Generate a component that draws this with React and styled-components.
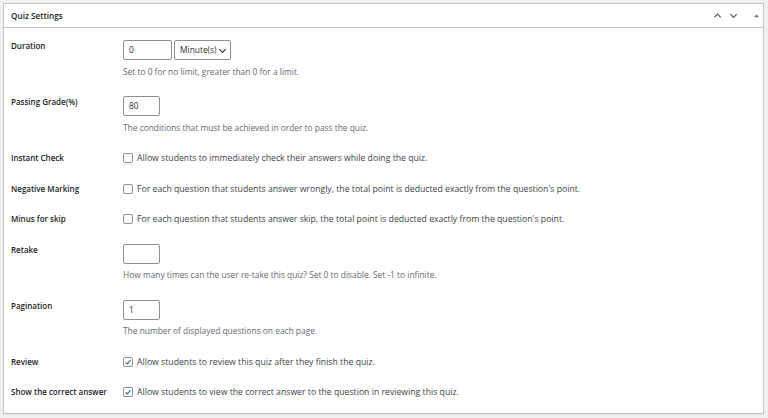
import React from "react";
import styled, { createGlobalStyle } from "styled-components";

const GlobalStyle = createGlobalStyle`
    html, body {
        margin: 0;
        padding: 0;
        background: #f0f0f1;
    }
    body {
        font-family: "Open Sans", "Noto Sans", sans-serif;
        font-size: 8.4px;
        color: #3c434a;
    }
`;

const settings = [
    {
        label: "Duration",
        type: "duration",
        value: "0",
        desc: "Set to 0 for no limit, greater than 0 for a limit.",
    },
    {
        label: "Passing Grade(%)",
        type: "number",
        value: "80",
        desc: "The conditions that must be achieved in order to pass the quiz.",
    },
    {
        label: "Instant Check",
        type: "check",
        checked: false,
        text: "Allow students to immediately check their answers while doing the quiz.",
    },
    {
        label: "Negative Marking",
        type: "check",
        checked: false,
        text: "For each question that students answer wrongly, the total point is deducted exactly from the question's point.",
    },
    {
        label: "Minus for skip",
        type: "check",
        checked: false,
        text: "For each question that students answer skip, the total point is deducted exactly from the question's point.",
    },
    {
        label: "Retake",
        type: "number",
        value: "",
        desc: "How many times can the user re-take this quiz? Set 0 to disable. Set -1 to infinite.",
    },
    {
        label: "Pagination",
        type: "number",
        value: "1",
        desc: "The number of displayed questions on each page.",
    },
    {
        label: "Review",
        type: "check",
        checked: true,
        text: "Allow students to review this quiz after they finish the quiz.",
    },
    {
        label: "Show the correct answer",
        type: "check",
        checked: true,
        text: "Allow students to view the correct answer to the question in reviewing this quiz.",
    },
];

const Chevron = ({ up, color = "#50575e" }) => (
    <svg width="9" height="9" viewBox="0 0 10 10">
        <path
            d={up ? "M1.5 7 L5 3.5 L8.5 7" : "M1.5 3.5 L5 7 L8.5 3.5"}
            fill="none"
            stroke={color}
            strokeWidth="1.3"
        />
    </svg>
);

const Caret = () => (
    <svg width="7" height="7" viewBox="0 0 8 8">
        <path d="M1 6 L4 2.5 L7 6 Z" fill="#787c82" />
    </svg>
);

const Tick = () => (
    <svg width="8" height="8" viewBox="0 0 10 10">
        <path
            d="M2 5.2 L4.2 7.3 L8.2 2.6"
            fill="none"
            stroke="#2271b1"
            strokeWidth="1.5"
        />
    </svg>
);

const Field = ({ item }) => {
    if (item.type === "check") {
        return (
            <CheckLine>
                <CheckBox>{item.checked && <Tick />}</CheckBox>
                <span>{item.text}</span>
            </CheckLine>
        );
    }
    return (
        <div>
            <Controls>
                <TextInput wide={item.type === "duration"}>{item.value}</TextInput>
                {item.type === "duration" && (
                    <Select>
                        Minute(s)
                        <Chevron color="#2c3338" />
                    </Select>
                )}
            </Controls>
            <Description>{item.desc}</Description>
        </div>
    );
};

const App = () => {
    return (
        <>
            <GlobalStyle />
            <Panel>
                <Header>
                    <Title>Quiz Settings</Title>
                    <Actions>
                        <Chevron up />
                        <Chevron />
                        <CaretWrap>
                            <Caret />
                        </CaretWrap>
                    </Actions>
                </Header>
                <Body>
                    {settings.map((item) => (
                        <Row key={item.label} compact={item.type === "check"}>
                            <Label>{item.label}</Label>
                            <Field item={item} />
                        </Row>
                    ))}
                </Body>
            </Panel>
        </>
    );
};

const Panel = styled.div`
    margin: 3px 4px 5px 3px;
    background: #fff;
    border: 1px solid #c3c4c7;
    box-shadow: 0 1px 1px rgba(0, 0, 0, 0.04);
`;

const Header = styled.div`
    height: 23px;
    display: flex;
    align-items: center;
    justify-content: space-between;
    padding: 0 3px 0 7px;
    border-bottom: 1px solid #c3c4c7;
`;

const Title = styled.div`
    font-weight: 600;
    color: #1d2327;
    font-size: 8.2px;
`;

const Actions = styled.div`
    display: flex;
    align-items: center;
    gap: 7px;
`;

const CaretWrap = styled.span`
    display: flex;
    margin-left: 8px;
`;

const Body = styled.div`
    padding: 3px 7px 5px 7px;
`;

const Row = styled.div`
    display: grid;
    grid-template-columns: 112px 1fr;
    align-items: start;
    padding: 9.25px 0;
    line-height: ${({ compact }) => (compact ? "12px" : "12.5px")};
`;

const Label = styled.div`
    font-weight: 600;
    font-size: 8px;
    color: #1d2327;
`;

const Controls = styled.div`
    display: flex;
    gap: 2px;
`;

const TextInput = styled.div`
    box-sizing: border-box;
    width: ${({ wide }) => (wide ? "49px" : "37px")};
    height: 20px;
    border: 1px solid #8c8f94;
    border-radius: 2px;
    padding: 0 5px;
    line-height: 18px;
    color: #2c3338;
    background: #fff;
`;

const Select = styled.div`
    box-sizing: border-box;
    height: 20px;
    width: 57px;
    border: 1px solid #8c8f94;
    border-radius: 2px;
    padding: 0 3px 0 5px;
    display: flex;
    align-items: center;
    justify-content: space-between;
    color: #2c3338;
`;

const Description = styled.p`
    margin: 4.5px 0 0;
    line-height: 13px;
    color: #646970;
`;

const CheckLine = styled.div`
    display: flex;
    align-items: center;
    gap: 4px;
    font-size: 8.7px;
`;

const CheckBox = styled.span`
    box-sizing: border-box;
    width: 10px;
    height: 10px;
    border: 1px solid #8c8f94;
    border-radius: 2px;
    display: flex;
    align-items: center;
    justify-content: center;
    flex-shrink: 0;
`;

export default App;
